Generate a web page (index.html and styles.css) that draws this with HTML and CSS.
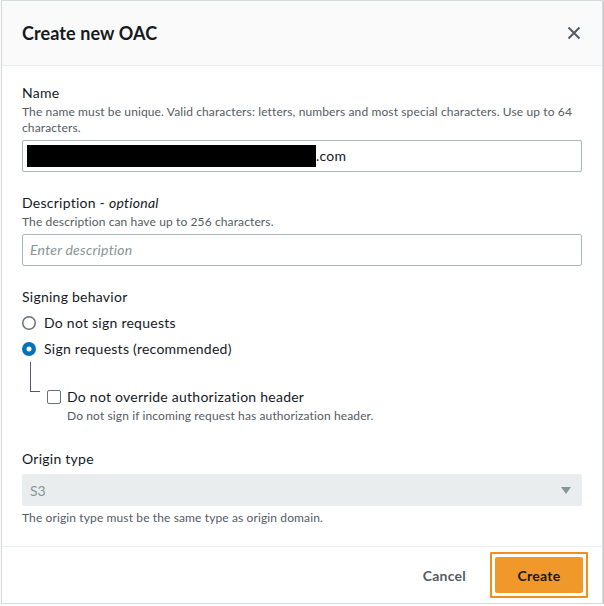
FILE: index.html
```html
<!DOCTYPE html>
<html lang="en">
<head>
  <meta charset="UTF-8" />
  <meta name="viewport" content="width=device-width, initial-scale=1.0"/>
  <title>Create new OAC</title>
  <link rel="stylesheet" href="styles.css">
</head>
<body>
  <div class="modal">
    <header class="modal-header">
      <h2>Create new OAC</h2>
      <button type="button" class="close-btn" aria-label="Close">
        <svg width="16" height="16" viewBox="0 0 16 16"><path d="M2.5 2.5l11 11M13.5 2.5l-11 11" stroke="#545b64" stroke-width="2" fill="none"/></svg>
      </button>
    </header>

    <main class="modal-body">
      <div class="field">
        <div class="label">Name</div>
        <div class="hint">The name must be unique. Valid characters: letters, numbers and most special characters. Use up to 64 characters.</div>
        <div class="input"><span class="redacted"></span>.com</div>
      </div>

      <div class="field">
        <div class="label">Description - <i>optional</i></div>
        <div class="hint">The description can have up to 256 characters.</div>
        <div class="input placeholder">Enter description</div>
      </div>

      <div class="field">
        <div class="label">Signing behavior</div>
        <label class="radio">
          <svg width="14" height="14" viewBox="0 0 14 14"><circle cx="7" cy="7" r="6.25" fill="#fff" stroke="#687078" stroke-width="1.5"/></svg>
          Do not sign requests
        </label>
        <label class="radio">
          <svg width="14" height="14" viewBox="0 0 14 14"><circle cx="7" cy="7" r="7" fill="#0073bb"/><circle cx="7" cy="7" r="2.5" fill="#fff"/></svg>
          Sign requests (recommended)
        </label>
        <div class="nested">
          <div class="connector"></div>
          <div class="nested-option">
            <label class="checkbox">
              <span class="box"></span>
              Do not override authorization header
            </label>
            <div class="hint">Do not sign if incoming request has authorization header.</div>
          </div>
        </div>
      </div>

      <div class="field">
        <div class="label">Origin type</div>
        <div class="select">
          <span>S3</span>
          <svg width="10" height="7" viewBox="0 0 10 7"><path d="M0 0h10L5 7z" fill="#879596"/></svg>
        </div>
        <div class="hint">The origin type must be the same type as origin domain.</div>
      </div>
    </main>

    <footer class="modal-footer">
      <button type="button" class="btn-link">Cancel</button>
      <span class="focus-ring">
        <button type="button" class="btn-primary">Create</button>
      </span>
    </footer>
  </div>
</body>
</html>
```

FILE: styles.css
```css
body {
  margin: 0;
  background: #ffffff;
  font-family: Lato, "Open Sans", sans-serif;
  color: #16191f;
}

.modal {
  box-sizing: border-box;
  margin-left: 1px;
  width: 602px;
  height: 604px;
  border: 1px solid #d5dbdb;
  box-shadow: 1px 1px 2px rgba(0,0,0,0.3);
  display: flex;
  flex-direction: column;
  background: #ffffff;
}

.modal-header {
  height: 64px;
  flex-shrink: 0;
  background: #fafafa;
  border-bottom: 1px solid #eaeded;
  padding: 0 20px;
  display: flex;
  align-items: center;
  justify-content: space-between;
}

.modal-header h2 {
  margin: 0;
  font-size: 18px;
  font-weight: 700;
  color: #16191f;
  letter-spacing: 0.1px;
}

.close-btn {
  border: none;
  background: none;
  padding: 0;
  width: 16px;
  height: 16px;
  cursor: pointer;
}

.modal-body {
  flex: 1;
  padding: 16px 20px 20px;
  display: flex;
  flex-direction: column;
  gap: 20px;
}

.label {
  font-size: 14px;
  line-height: 22px;
  letter-spacing: 0.25px;
}

.hint {
  font-size: 12px;
  line-height: 16px;
  color: #545b64;
  letter-spacing: 0.12px;
}

.input {
  box-sizing: border-box;
  height: 32px;
  margin-top: 4px;
  border: 1px solid #aab7b8;
  border-radius: 2px;
  padding: 0 7px;
  font-size: 14px;
  line-height: 30px;
  letter-spacing: 0.25px;
  display: flex;
  align-items: center;
}

.input.placeholder {
  color: #879596;
  font-style: italic;
}

.redacted {
  display: inline-block;
  width: 289px;
  height: 22px;
  margin-left: -3px;
  background: #000000;
}

.radio {
  display: flex;
  align-items: center;
  gap: 8px;
  font-size: 14px;
  line-height: 22px;
  letter-spacing: 0.25px;
  margin-top: 4px;
}

.nested {
  display: flex;
  margin-top: 2px;
  margin-bottom: 4px;
}

.connector {
  margin-left: 8px;
  width: 10px;
  height: 30px;
  border-left: 1px solid #545b64;
  border-bottom: 1px solid #545b64;
  box-sizing: border-box;
}

.nested-option {
  margin-left: 7px;
  margin-top: 24px;
}

.checkbox {
  display: flex;
  align-items: center;
  gap: 6px;
  font-size: 14px;
  line-height: 22px;
  letter-spacing: 0.25px;
}

.checkbox .box {
  box-sizing: border-box;
  width: 14px;
  height: 14px;
  border: 1px solid #687078;
  border-radius: 2px;
}

.nested-option .hint {
  padding-left: 20px;
}

.select {
  box-sizing: border-box;
  height: 32px;
  margin: 4px 0;
  background: #eaeded;
  border: 1px solid #eaeded;
  border-radius: 2px;
  padding: 0 10px 0 7px;
  font-size: 14px;
  color: #879596;
  display: flex;
  align-items: center;
  justify-content: space-between;
}

.modal-footer {
  height: 56px;
  flex-shrink: 0;
  border-top: 1px solid #eaeded;
  padding: 0 14px 0 19px;
  display: flex;
  align-items: center;
  justify-content: flex-end;
  gap: 4px;
}

.btn-link {
  border: none;
  background: none;
  padding: 0 20px;
  height: 32px;
  font-family: inherit;
  font-size: 14px;
  font-weight: 700;
  letter-spacing: 0.25px;
  color: #545b64;
  cursor: pointer;
}

.focus-ring {
  display: flex;
  padding: 3px;
  border: 2px solid #ef8f1f;
  border-radius: 1px;
}

.btn-primary {
  width: 88px;
  height: 36px;
  border: none;
  border-radius: 2px;
  background: #f0982a;
  font-family: inherit;
  font-size: 14px;
  font-weight: 700;
  letter-spacing: 0.25px;
  color: #16191f;
  cursor: pointer;
}
```
